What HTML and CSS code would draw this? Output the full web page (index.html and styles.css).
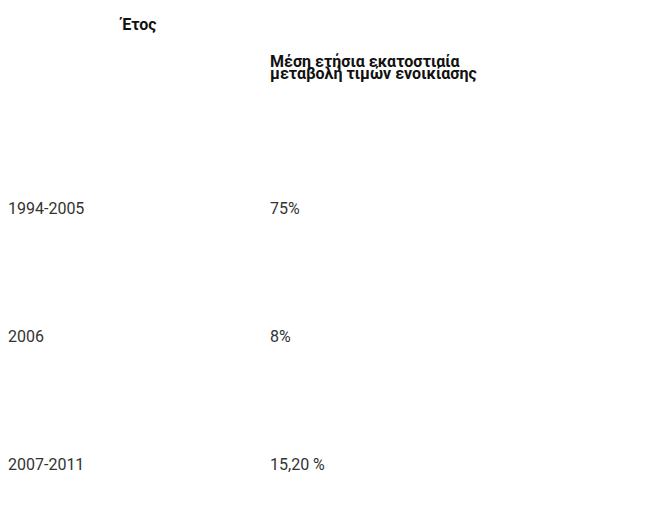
FILE: index.html
```html
<!DOCTYPE html>
<html lang="el">
<head>
<meta charset="utf-8">
<title>Μεταβολή τιμών ενοικίασης</title>
<link rel="stylesheet" href="styles.css">
</head>
<body>
<table class="rates">
  <thead>
    <tr class="head-row">
      <th class="col-year">Έτος</th>
      <th class="col-change">Μέση ετήσια εκατοστιαία<br>μεταβολή τιμών ενοικίασης</th>
    </tr>
  </thead>
  <tbody>
    <tr class="data-row">
      <td>1994-2005</td>
      <td>75%</td>
    </tr>
    <tr class="data-row">
      <td>2006</td>
      <td>8%</td>
    </tr>
    <tr class="data-row">
      <td>2007-2011</td>
      <td>15,20 %</td>
    </tr>
  </tbody>
</table>
</body>
</html>
```

FILE: styles.css
```css
html, body {
  margin: 0;
  padding: 0;
  background: #fff;
}

body {
  font-family: Roboto, "Noto Sans", sans-serif;
  font-size: 16px;
  color: #333;
}

.rates {
  border-collapse: collapse;
  border-spacing: 0;
  margin-left: 8px;
}

.rates th,
.rates td {
  padding: 0;
  text-align: left;
}

.head-row {
  height: 145px;
}

.rates th {
  vertical-align: top;
  font-weight: 700;
  color: #111;
}

.rates th.col-year {
  width: 262px;
  padding-top: 16px;
  line-height: 18px;
  text-align: center;
}

.rates th.col-change {
  padding-top: 56px;
  line-height: 11.5px;
}

.data-row {
  height: 128px;
}

.data-row td {
  vertical-align: middle;
  line-height: 18px;
}
```
